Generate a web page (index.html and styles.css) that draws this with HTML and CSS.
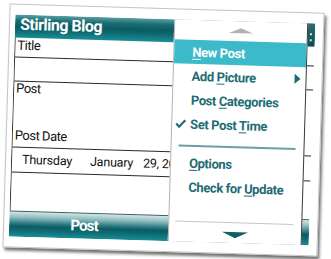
FILE: index.html
```html
<!DOCTYPE html>
<html>
<head>
<meta charset="utf-8">
<link rel="stylesheet" href="styles.css">
</head>
<body>
<div class="frame">
  <div class="screen">
    <div class="titlebar">
      <span class="title">Stirling Blog</span>
      <span class="status"><i></i><i></i></span>
    </div>
    <div class="form">
      <div class="label first">Title</div>
      <div class="textbox"></div>
      <div class="label">Post</div>
      <div class="postarea"></div>
      <div class="label date-label">Post Date</div>
      <div class="datebox"><span class="d1">Thursday</span><span class="d2">January</span><span class="d3">29, 2009</span></div>
      <div class="spacer"></div>
    </div>
    <div class="softkeys">
      <div class="sk">Post</div>
      <div class="sk">Menu</div>
    </div>
    <div class="menu">
      <div class="arrow-up"></div>
      <div class="item active"><span class="mark"></span><span><u>N</u>ew Post</span></div>
      <div class="item"><span class="mark"></span><span>Add <u>P</u>icture</span><span class="sub"></span></div>
      <div class="item"><span class="mark"></span><span>Post <u>C</u>ategories</span></div>
      <div class="item"><span class="mark"><svg width="11" height="10" viewBox="0 0 11 10"><path d="M1 5.2 L4 8.2 L10 1.5" fill="none" stroke="#1e6c73" stroke-width="2.2"/></svg></span><span>Set Post <u>T</u>ime</span></div>
      <div class="sep"></div>
      <div class="item"><span class="mark"></span><span><u>O</u>ptions</span></div>
      <div class="item"><span class="mark"></span><span>Check for <u>U</u>pdate</span></div>
      <div class="sep2"></div>
      <div class="arrow-down"></div>
    </div>
  </div>
</div>
</body>
</html>
```
FILE: styles.css
```css
html, body {
  margin: 0;
  padding: 0;
  background: #ffffff;
}
body {
  width: 331px;
  height: 259px;
  overflow: hidden;
  font-family: Roboto, "Liberation Sans", sans-serif;
}
.frame {
  box-sizing: border-box;
  width: 315px;
  height: 244px;
  margin: 8px 0 0 6px;
  padding: 10px 8px 10px 5px;
  background: #ffffff;
  border: 1px solid #c4c4c4;
  box-shadow: 2px 3px 3px rgba(0, 0, 0, 0.55);
  transform: rotate(1.7deg);
  transform-origin: 50% 50%;
}
.screen {
  position: relative;
  width: 300px;
  height: 222px;
  display: flex;
  flex-direction: column;
  background: #ffffff;
  overflow: hidden;
}
.titlebar {
  height: 23px;
  flex: none;
  display: flex;
  background: linear-gradient(to bottom, #5a9fa4 0%, #1b6d74 25%, #0b5b62 50%, #0f6c73 70%, #1a8e96 100%);
}
.title {
  padding-left: 5px;
  color: #ffffff;
  font-weight: bold;
  font-size: 16px;
  letter-spacing: -0.5px;
  line-height: 19px;
}
.status {
  margin-left: auto;
  width: 8px;
  background: linear-gradient(to bottom, #2d6d72, #0a4b51);
  display: flex;
  flex-direction: column;
  align-items: center;
  padding-top: 10px;
  box-sizing: border-box;
  gap: 4px;
}
.status i {
  width: 2px;
  height: 2px;
  background: #d8e8ea;
}
.form {
  flex: 1;
  display: flex;
  flex-direction: column;
  border-left: 1px solid #333333;
}
.label {
  font-size: 13px;
  letter-spacing: -0.5px;
  line-height: 14px;
  color: #111111;
  padding-left: 2px;
  height: 14px;
}
.label.first {
  height: 18px;
  padding-top: 1px;
}
.textbox {
  height: 23px;
  border-top: 1px solid #2a2a2a;
  border-bottom: 1px solid #2a2a2a;
}
.postarea {
  height: 32px;
}
.date-label {
  height: 18px;
  padding-top: 1px;
}
.datebox {
  border-top: 1px solid #2a2a2a;
  border-bottom: 1px solid #2a2a2a;
  display: flex;
  align-items: center;
  padding-left: 10px;
  padding-bottom: 2px;
  box-sizing: border-box;
  height: 26px;
  font-size: 12.5px;
  letter-spacing: -0.2px;
  color: #111111;
  white-space: nowrap;
}
.d1 { width: 68px; }
.d2 { width: 53px; }
.spacer {
  flex: 1;
}
.softkeys {
  height: 26px;
  flex: none;
  display: flex;
  border-top: 1px solid #3e5d60;
  box-sizing: border-box;
  background: linear-gradient(to bottom, #d4e6e8 0%, #8fbcc0 22%, #2f7d84 45%, #0b5c63 58%, #0e6c73 75%, #1a8f97 100%);
}
.sk {
  width: 150px;
  text-align: center;
  color: #ffffff;
  font-weight: bold;
  font-size: 15px;
  letter-spacing: -0.8px;
  line-height: 25px;
}
.menu {
  position: absolute;
  top: 0;
  bottom: 0;
  left: 159px;
  width: 134px;
  box-sizing: border-box;
  background: #ffffff;
  border-left: 1px solid #b4b4b4;
  border-right: 1px solid #3a3a3a;
  display: flex;
  flex-direction: column;
}
.arrow-up {
  width: 0;
  height: 0;
  margin: 7px auto 8px;
  border-left: 12px solid transparent;
  border-right: 12px solid transparent;
  border-bottom: 5px solid #b2b2b2;
}
.item {
  height: 24px;
  display: flex;
  align-items: center;
  font-size: 13px;
  letter-spacing: -0.4px;
  font-weight: bold;
  color: #1e6c73;
  white-space: nowrap;
}
.item.active {
  background: #3cbaca;
  color: #ffffff;
}
.item u {
  text-decoration-thickness: 1px;
  text-underline-offset: 2px;
}
.mark {
  width: 18px;
  flex: none;
  display: flex;
  align-items: center;
  padding-left: 3px;
  box-sizing: border-box;
}
.sub {
  margin-left: auto;
  margin-right: 5px;
  width: 0;
  height: 0;
  border-left: 6px solid #1e6c73;
  border-top: 5px solid transparent;
  border-bottom: 5px solid transparent;
}
.sep {
  height: 2px;
  margin: 9px 8px 4px 7px;
  background: #6b9fa3;
}
.sep2 {
  height: 1px;
  margin: 22px 8px 0 6px;
  background: #c6c6c6;
}
.arrow-down {
  width: 0;
  height: 0;
  margin: 9px auto 0;
  border-left: 13px solid transparent;
  border-right: 13px solid transparent;
  border-top: 6px solid #0f5f66;
}
```
